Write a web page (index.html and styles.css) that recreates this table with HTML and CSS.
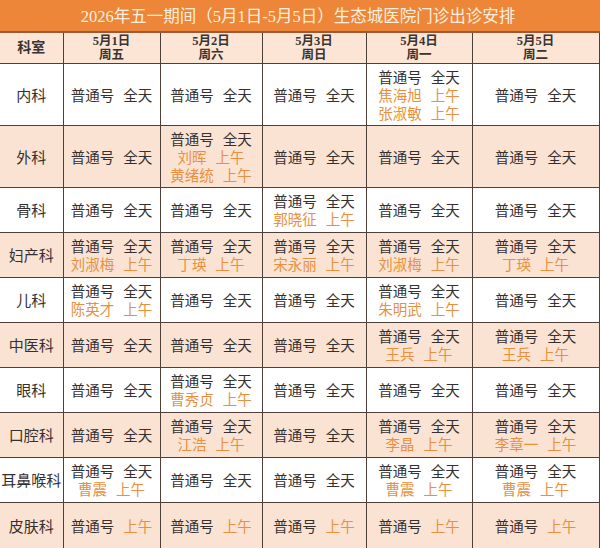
FILE: index.html
```html
<!DOCTYPE html>
<html lang="zh">
<head>
<meta charset="utf-8">
<title>生态城医院门诊出诊安排</title>
<link rel="stylesheet" href="styles.css">
</head>
<body>
<div class="sheet">
  <div class="title">2026年五一期间（5月1日-5月5日）生态城医院门诊出诊安排</div>
  <table class="grid">
    <colgroup>
      <col class="c0"><col class="c1"><col class="c2"><col class="c3"><col class="c4"><col class="c5">
    </colgroup>
    <thead>
      <tr class="head">
        <th>科室</th>
        <th>5月1日<br>周五</th>
        <th>5月2日<br>周六</th>
        <th>5月3日<br>周日</th>
        <th>5月4日<br>周一</th>
        <th>5月5日<br>周二</th>
      </tr>
    </thead>
    <tbody>
      <tr class="tall">
        <td class="dept">内科</td>
        <td>普通号<i></i>全天</td>
        <td>普通号<i></i>全天</td>
        <td>普通号<i></i>全天</td>
        <td>普通号<i></i>全天<br><span class="doc">焦海旭<i></i>上午</span><br><span class="doc">张淑敏<i></i>上午</span></td>
        <td>普通号<i></i>全天</td>
      </tr>
      <tr class="tall alt">
        <td class="dept">外科</td>
        <td>普通号<i></i>全天</td>
        <td>普通号<i></i>全天<br><span class="doc">刘晖<i></i>上午</span><br><span class="doc">黄绪统<i></i>上午</span></td>
        <td>普通号<i></i>全天</td>
        <td>普通号<i></i>全天</td>
        <td>普通号<i></i>全天</td>
      </tr>
      <tr>
        <td class="dept">骨科</td>
        <td>普通号<i></i>全天</td>
        <td>普通号<i></i>全天</td>
        <td>普通号<i></i>全天<br><span class="doc">郭晓征<i></i>上午</span></td>
        <td>普通号<i></i>全天</td>
        <td>普通号<i></i>全天</td>
      </tr>
      <tr class="alt">
        <td class="dept">妇产科</td>
        <td>普通号<i></i>全天<br><span class="doc">刘淑梅<i></i>上午</span></td>
        <td>普通号<i></i>全天<br><span class="doc">丁瑛<i></i>上午</span></td>
        <td>普通号<i></i>全天<br><span class="doc">宋永丽<i></i>上午</span></td>
        <td>普通号<i></i>全天<br><span class="doc">刘淑梅<i></i>上午</span></td>
        <td>普通号<i></i>全天<br><span class="doc">丁瑛<i></i>上午</span></td>
      </tr>
      <tr>
        <td class="dept">儿科</td>
        <td>普通号<i></i>全天<br><span class="doc">陈英才<i></i>上午</span></td>
        <td>普通号<i></i>全天</td>
        <td>普通号<i></i>全天</td>
        <td>普通号<i></i>全天<br><span class="doc">朱明武<i></i>上午</span></td>
        <td>普通号<i></i>全天</td>
      </tr>
      <tr class="alt">
        <td class="dept">中医科</td>
        <td>普通号<i></i>全天</td>
        <td>普通号<i></i>全天</td>
        <td>普通号<i></i>全天</td>
        <td>普通号<i></i>全天<br><span class="doc">王兵<i></i>上午</span></td>
        <td>普通号<i></i>全天<br><span class="doc">王兵<i></i>上午</span></td>
      </tr>
      <tr>
        <td class="dept">眼科</td>
        <td>普通号<i></i>全天</td>
        <td>普通号<i></i>全天<br><span class="doc">曹秀贞<i></i>上午</span></td>
        <td>普通号<i></i>全天</td>
        <td>普通号<i></i>全天</td>
        <td>普通号<i></i>全天</td>
      </tr>
      <tr class="alt">
        <td class="dept">口腔科</td>
        <td>普通号<i></i>全天</td>
        <td>普通号<i></i>全天<br><span class="doc">江浩<i></i>上午</span></td>
        <td>普通号<i></i>全天</td>
        <td>普通号<i></i>全天<br><span class="doc">李晶<i></i>上午</span></td>
        <td>普通号<i></i>全天<br><span class="doc">李章一<i></i>上午</span></td>
      </tr>
      <tr>
        <td class="dept">耳鼻喉科</td>
        <td>普通号<i></i>全天<br><span class="doc">曹震<i></i>上午</span></td>
        <td>普通号<i></i>全天</td>
        <td>普通号<i></i>全天</td>
        <td>普通号<i></i>全天<br><span class="doc">曹震<i></i>上午</span></td>
        <td>普通号<i></i>全天<br><span class="doc">曹震<i></i>上午</span></td>
      </tr>
      <tr class="alt last">
        <td class="dept">皮肤科</td>
        <td>普通号<i></i><span class="doc">上午</span></td>
        <td>普通号<i></i><span class="doc">上午</span></td>
        <td>普通号<i></i><span class="doc">上午</span></td>
        <td>普通号<i></i><span class="doc">上午</span></td>
        <td>普通号<i></i><span class="doc">上午</span></td>
      </tr>
    </tbody>
  </table>
</div>
</body>
</html>
```

FILE: styles.css
```css
html, body {
  margin: 0;
  padding: 0;
  background: #ffffff;
}

body {
  font-family: "Liberation Serif", "Noto Sans CJK SC", serif;
  color: #353030;
}

.sheet {
  width: 600px;
  height: 548px;
  overflow: hidden;
}

.title {
  height: 33px;
  box-sizing: border-box;
  background: #ee8639;
  border-bottom: 2px solid #9a5a35;
  color: #fdefdd;
  font-size: 16.5px;
  line-height: 29px;
  padding-top: 2px;
  text-align: center;
  padding-right: 4px;
}

.grid {
  width: 599px;
  border-collapse: collapse;
  table-layout: fixed;
  font-size: 14.5px;
}

.c0 { width: 63px; }
.c1 { width: 97px; }
.c2 { width: 102px; }
.c3 { width: 104px; }
.c4 { width: 106px; }
.c5 { width: 127px; }

.grid th,
.grid td {
  border: 1px solid #4e4039;
  text-align: center;
  vertical-align: middle;
  padding: 3px 0 0;
}

.grid tr:first-child th {
  border-top: none;
}

.grid th:first-child,
.grid td:first-child {
  border-left: none;
}

.head {
  height: 30px;
  background: #fce5d5;
}

.head th {
  font-size: 12.5px;
  font-weight: 700;
  line-height: 14px;
  color: #3a3330;
  padding-top: 1px;
}

.head th:first-child {
  font-size: 14px;
}

.grid tbody tr {
  height: 45px;
}

.grid tbody tr.tall {
  height: 62px;
}

.grid tbody tr.last {
  height: 46px;
}

.grid td {
  line-height: 18px;
  font-weight: 400;
}

.alt {
  background: #fbe3d3;
}

.dept {
  font-size: 15px;
  white-space: nowrap;
}

.grid i {
  display: inline-block;
  width: 9px;
}

.doc {
  color: #e8903f;
}
```
